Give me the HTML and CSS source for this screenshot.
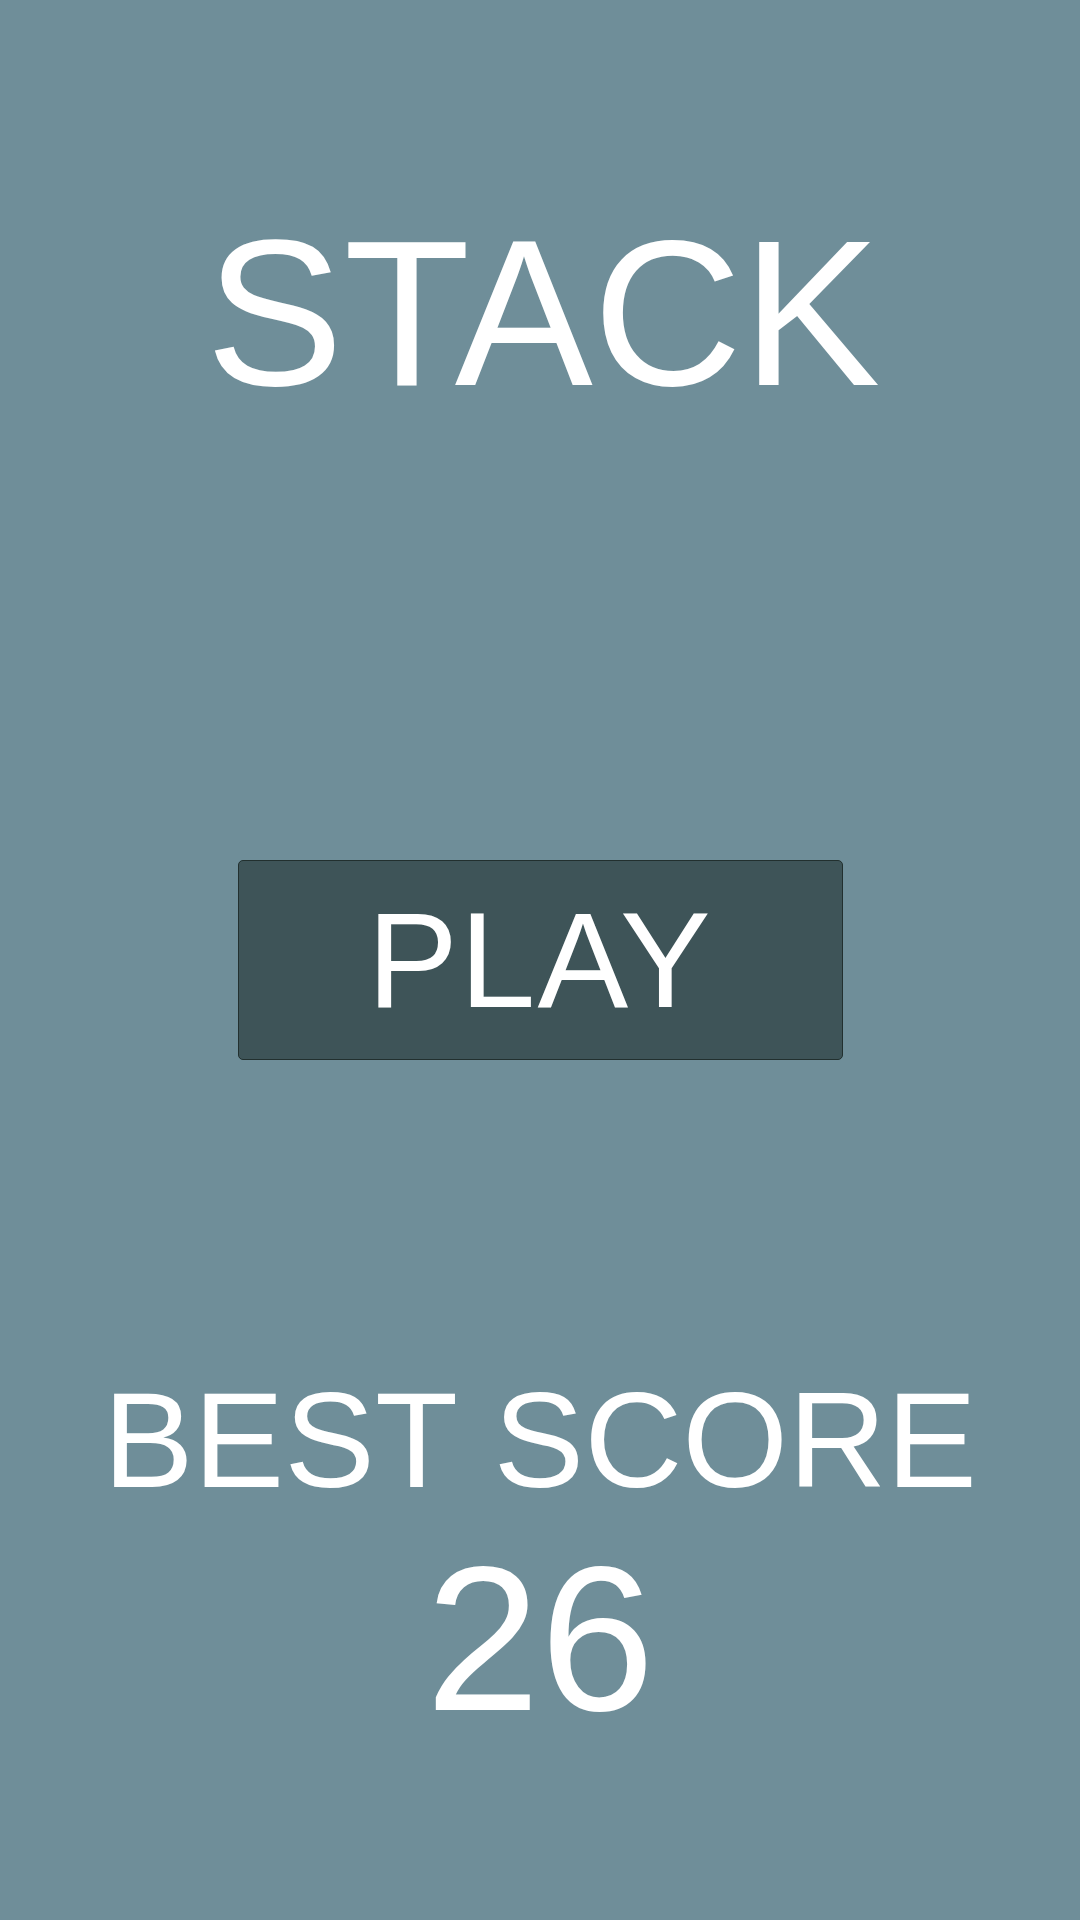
FILE: index.html
```html
<!DOCTYPE html>
<html>
<head>
<meta charset="utf-8">
<link rel="stylesheet" href="styles.css">
</head>
<body>
<main class="screen">
  <h1 class="title">STACK</h1>
  <button class="play">PLAY</button>
  <div class="best-label">BEST SCORE</div>
  <div class="best-value">26</div>
</main>
</body>
</html>
```
FILE: styles.css
```css
html, body {
  margin: 0;
  padding: 0;
  background: #6f8e99;
}
.screen {
  width: 1080px;
  height: 1920px;
  display: flex;
  flex-direction: column;
  align-items: center;
  font-family: "Liberation Sans", Arial, sans-serif;
  color: #ffffff;
  box-sizing: border-box;
  padding-top: 210px;
}
.title {
  margin: 0 0 0 6px;
  font-size: 207px;
  line-height: 207px;
  font-weight: 400;
}
.play {
  margin-top: 443px;
  width: 605px;
  height: 200px;
  background: #3e5458;
  border: 1px solid #22302f;
  border-radius: 5px;
  color: #ffffff;
  font-family: inherit;
  font-size: 136px;
  line-height: 136px;
  letter-spacing: 2px;
  display: flex;
  align-items: center;
  justify-content: center;
  padding: 0;
}
.best-label {
  margin-top: 312px;
  font-size: 136px;
  line-height: 136px;
}
.best-value {
  margin-top: 28px;
  font-size: 206px;
  line-height: 206px;
}
```
